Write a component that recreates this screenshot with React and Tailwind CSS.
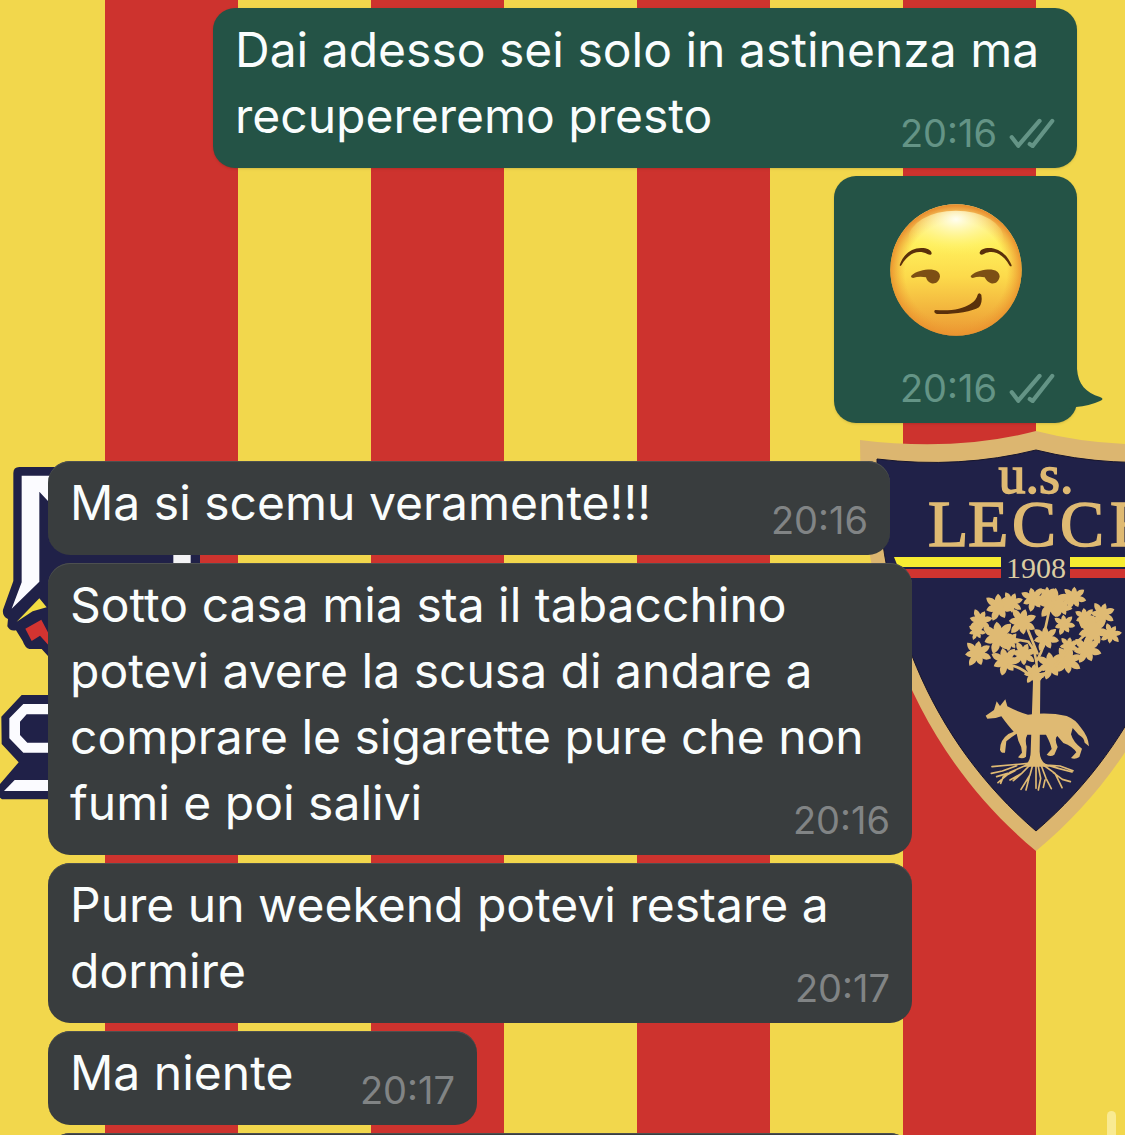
import React from 'react';
import clsx from 'clsx';

const messages = [
    { id: 1, side: 'out', lines: ['Dai adesso sei solo in astinenza ma', 'recupereremo presto'], time: '20:16', width: 'w-[864px]' },
    { id: 2, side: 'out', emoji: true, time: '20:16', width: 'w-[243px]', tail: true },
    { id: 3, side: 'in', lines: ['Ma si scemu veramente!!!'], time: '20:16', width: 'w-[842px]', gap: true },
    { id: 4, side: 'in', lines: ['Sotto casa mia sta il tabacchino', 'potevi avere la scusa di andare a', 'comprare le sigarette pure che non', 'fumi e poi salivi'], time: '20:16', width: 'w-[864px]' },
    { id: 5, side: 'in', lines: ['Pure un weekend potevi restare a', 'dormire'], time: '20:17', width: 'w-[864px]' },
    { id: 6, side: 'in', lines: ['Ma niente'], time: '20:17', width: 'w-[429px]' },
    { id: 7, side: 'in', lines: [''], width: 'w-[864px]' },
];

// x, y, radius, rotation of each leaf cluster in the tree
const leaves = [
    [296, 110, 46, 10], [334, 98, 36, 35], [240, 152, 38, 40], [230, 184, 28, 10], [296, 200, 54, 5],
    [330, 214, 30, 0], [232, 250, 44, 20], [365, 155, 46, 30], [400, 86, 40, 0], [458, 98, 54, 25],
    [442, 74, 28, 10], [484, 110, 34, 10], [522, 82, 38, 15], [555, 142, 34, 5], [606, 132, 40, 30],
    [578, 182, 52, 10], [632, 192, 34, 45], [436, 204, 42, 12], [370, 252, 40, 35], [316, 272, 46, 0],
    [400, 310, 34, 20], [452, 285, 46, 5], [502, 272, 46, 32], [560, 238, 46, 16], [492, 163, 34, 8],
    [506, 228, 32, 22],
];

const leafPath = (cx, cy, r, rot) => {
    const lobes = 7;
    const step = 360 / lobes;
    const at = (deg, len) => {
        const a = ((deg + rot) * Math.PI) / 180;
        return `${(cx + Math.cos(a) * len).toFixed(1)} ${(cy + Math.sin(a) * len).toFixed(1)}`;
    };
    let d = '';
    for (let i = 0; i < lobes; i++) {
        const base = i * step;
        const reach = i % 2 ? r * 0.84 : r;
        d += `${i === 0 ? 'M' : 'L'}${at(base - step / 2, r * 0.5)} Q${at(base - 20, reach * 0.8)} ${at(base, reach)} Q${at(base + 20, reach * 0.8)} ${at(base + step / 2, r * 0.5)} `;
    }
    return `${d}Z`;
};

const Crest = () => (
    <svg className="absolute left-[860px] top-[425px] h-[430px] w-[352px]" viewBox="860 425 352 430" role="img" aria-label="U.S. Lecce 1908">
        <path d="M860 440Q955 452 1036 431Q1117 452 1212 440C1212 610 1152 755 1036 851C920 755 860 610 860 440Z" fill="#dcb670" />
        <path d="M877 459Q960 469 1036 450Q1112 469 1195 459C1195 610 1142 740 1036 831C930 740 877 610 877 459Z" fill="#202148" stroke="#17152d" />
        <g fill="#dfba73" fontFamily="Liberation Serif, serif">
            <text x="1036" y="493" fontSize="54" textAnchor="middle" stroke="#dfba73" strokeWidth="1.5">u.s.</text>
            <text x="928 968 1012 1060 1110" y="546" fontSize="66" stroke="#dfba73" strokeWidth="1.5">LECCE</text>
            <text x="1036" y="578" fontSize="30" textAnchor="middle" fill="#dccda2">1908</text>
        </g>
        <path d="M894 557H1001V567H898ZM1070 557H1178L1175 567H1070Z" fill="#f7ec32" />
        <path d="M898 569H1001V578H901ZM1070 569H1174L1171 578H1070Z" fill="#d03430" />
        <g transform="translate(900 570) scale(0.333333)" fill="#dfba73">
            {leaves.map(([x, y, r, rot]) => (
                <path key={`${x}-${y}`} d={leafPath(x, y, r, rot)} />
            ))}
            <g fill="none" stroke="#dfba73" strokeLinecap="round">
                <path strokeWidth="8" d="M402 330Q370 290 325 285M410 320Q415 250 385 215L330 205M418 325Q470 290 510 235L560 190M412 270Q440 220 435 180L450 110M412 250L380 170" />
            </g>
            <path d="M394 300L418 310L438 305L421 332L419 545Q420 578 450 590H370Q392 576 392 545L399 335Z" />
            <path d="M257 437L282 420L290 394L300 408L316 388L322 409Q350 424 384 434Q445 426 500 438Q526 447 544 475Q565 500 567 529L554 518Q553 503 536 494L518 474L513 493Q520 518 546 536L538 561Q525 570 513 564L529 547Q518 529 490 519L472 498Q462 506 473 531L463 554Q452 562 440 554L455 537Q452 520 438 494H382Q374 508 380 530L378 560Q368 569 354 562L366 548Q366 530 355 512L350 491Q335 500 319 514L315 548Q304 551 300 539Q300 510 325 492L341 485Q324 467 304 439L287 444L262 446Z" />
            <g fill="none" stroke="#dfba73" strokeWidth="5" strokeLinecap="round" strokeLinejoin="round">
                <path d="M385 580Q340 584 276 590M350 587L307 603L274 610M380 585L330 607L294 638M323 610L290 620M390 585L365 610L340 632M362 612L330 630M398 585L390 615L363 658M388 620L378 660M408 580V655M414 585L422 625L415 660M425 590L438 625L454 656M435 630L430 652M430 585L465 610L486 653M460 608L487 628L511 635M430 582L475 595L516 606M440 585L480 588L519 602M345 602L310 620L302 640" />
            </g>
        </g>
    </svg>
);

const SideLogo = () => (
    <svg className="absolute left-0 top-[455px] h-[350px] w-[210px]" viewBox="0 455 210 350" aria-hidden="true">
        <g transform="translate(0 455) scale(0.333333)">
            <path d="M40 54Q40 36 58 36H180V290H600V360H180V610H150L125 582H88Q76 580 68 558L48 526Q30 530 22 514L24 492Q6 484 9 464L40 378Z" fill="#202148" />
            <path d="M65 62H180V175L144 138L118 110V380L35 461L65 382Z" fill="#fbfbff" />
            <path d="M520 290H572V340H520Z" fill="#f3f3f5" />
            <path d="M50 500L118 430L140 457L98 469Z" fill="#f1dc42" />
            <path d="M76 521L124 494L156 555V582L120 542L95 558Z" fill="#d33431" />
        </g>
        <g transform="translate(0 680) scale(0.333333)">
            <path d="M4 110L65 45H180V358H6L-2 352V314L56 247L5 192Z" fill="#202148" />
            <path d="M70 72H180V103H80L60 125V165L82 188H180V218H70L28 175V115Z" fill="#fbfbff" />
            <path d="M44 300H180V333H12Z" fill="#fbfbff" />
        </g>
    </svg>
);

const Wallpaper = () => (
    <div className="absolute inset-0 overflow-hidden bg-[repeating-linear-gradient(90deg,#f2d74c_0px,#f2d74c_105px,#cd332e_105px,#cd332e_238px,#f2d74c_238px,#f2d74c_266px)]">
        <SideLogo />
        <Crest />
    </div>
);

const Smirk = () => (
    <svg className="h-[132px] w-[132px]" viewBox="178 99 396 396" role="img" aria-label="Smirking face">
        <defs>
            <linearGradient id="face" x1="0" y1="0" x2="0" y2="1">
                <stop offset="0" stopColor="#fff3a0" />
                <stop offset="0.3" stopColor="#fff05c" />
                <stop offset="0.55" stopColor="#fcda4b" />
                <stop offset="1" stopColor="#eb9733" />
            </linearGradient>
            <radialGradient id="rim" cx="0.5" cy="0.52" r="0.51">
                <stop offset="0.76" stopColor="#efa034" stopOpacity="0" />
                <stop offset="1" stopColor="#e88b2b" stopOpacity="0.95" />
            </radialGradient>
            <radialGradient id="shine" cx="0.5" cy="0.15" r="0.65">
                <stop offset="0" stopColor="#fffef2" />
                <stop offset="1" stopColor="#fff25e" stopOpacity="0" />
            </radialGradient>
        </defs>
        <circle cx="376" cy="297" r="197" fill="url(#face)" />
        <circle cx="376" cy="297" r="197" fill="url(#rim)" />
        <ellipse cx="376" cy="205" rx="143" ry="86" fill="url(#shine)" />
        <g fill="#5a300b">
            <path d="M207 282C220 245 248 228 278 231C294 232 303 240 303 247C302 253 296 252 290 249C260 234 232 248 212 283Q208 288 207 282Z" />
            <path d="M543 283C528 246 500 229 470 231C454 232 446 241 447 247C449 253 455 251 461 248C490 235 518 250 537 284Q543 289 543 283Z" />
            <path fill="#7d4f14" d="M241 315C258 299 284 295 306 296Q328 299 328 316C326 332 315 340 302 337Q289 332 286 319Q266 315 247 321Q240 320 241 315Z" />
            <path fill="#7d4f14" d="M420 315C437 299 463 295 485 296Q506 299 507 316C505 332 494 340 481 337Q468 332 462 319Q444 315 426 321Q419 320 420 315Z" />
            <path d="M314 417C360 421 396 414 418 400Q438 387 441 371Q445 362 452 371Q456 395 445 409C423 423 366 431 319 429Q310 426 311 420Q311 418 314 417Z" />
        </g>
    </svg>
);

const Ticks = () => (
    <svg className="h-[30px] w-[46px]" viewBox="391 48 138 92" fill="none" stroke="currentColor" strokeWidth="13" strokeLinecap="round" strokeLinejoin="round" role="img" aria-label="Delivered">
        <path d="M398 107L418 133L483 57M453 128L462 134L522 57" />
    </svg>
);

const Tail = () => (
    <svg className="absolute bottom-[14px] left-full -ml-2 h-[40px] w-[36px]" viewBox="0 0 36 40" aria-hidden="true">
        <path d="M0 0H8C9 15 17 24 31 28Q36 30 31 32Q20 37 7 38L0 40Z" fill="#245346" />
    </svg>
);

const Stamp = ({ time, out }) => (
    <div className={clsx('flex shrink-0 items-center gap-3 text-[38px] leading-[36px]', out ? 'text-[#649486]' : 'text-[#818485]')}>
        <time>{time}</time>
        {out && <Ticks />}
    </div>
);

const Message = ({ message }) => {
    const out = message.side === 'out';
    const lines = message.lines || [];
    return (
        <li
            className={clsx(
                'relative max-w-full rounded-[22px] px-[22px]',
                message.width,
                out ? 'self-end bg-[#245346] shadow-sm' : 'self-start bg-[#393d3e] shadow-[inset_0_1px_0_#4d5050]',
                message.gap && 'mt-[30px]',
                message.emoji ? 'flex flex-col items-center gap-[34px] pt-7 pb-[17px]' : 'pt-[9px] pb-[19px]'
            )}
        >
            {message.emoji ? (
                <>
                    <Smirk />
                    <div className="self-end"><Stamp time={message.time} out={out} /></div>
                </>
            ) : (
                <>
                    {lines.slice(0, -1).map(line => (
                        <p key={line} className="text-5xl leading-[66px] text-[#fafdfd]">{line}</p>
                    ))}
                    <div className="flex h-[66px] items-end justify-between">
                        <p className="text-5xl leading-[66px] text-[#fafdfd]">{lines[lines.length - 1]}</p>
                        {message.time && <div className="-mb-0.5"><Stamp time={message.time} out={out} /></div>}
                    </div>
                </>
            )}
            {message.tail && <Tail />}
        </li>
    );
};

const App = () => (
    <main className="relative h-screen overflow-hidden font-['Inter',sans-serif]">
        <Wallpaper />
        <ul className="relative flex flex-col gap-2 px-12 pt-2">
            {messages.map(message => (
                <Message key={message.id} message={message} />
            ))}
        </ul>
        {/* scroll indicator */}
        <div className="absolute right-[9px] bottom-0 h-6 w-[9px] rounded-t-full bg-[#f9ea92]" />
    </main>
);

export default App;
